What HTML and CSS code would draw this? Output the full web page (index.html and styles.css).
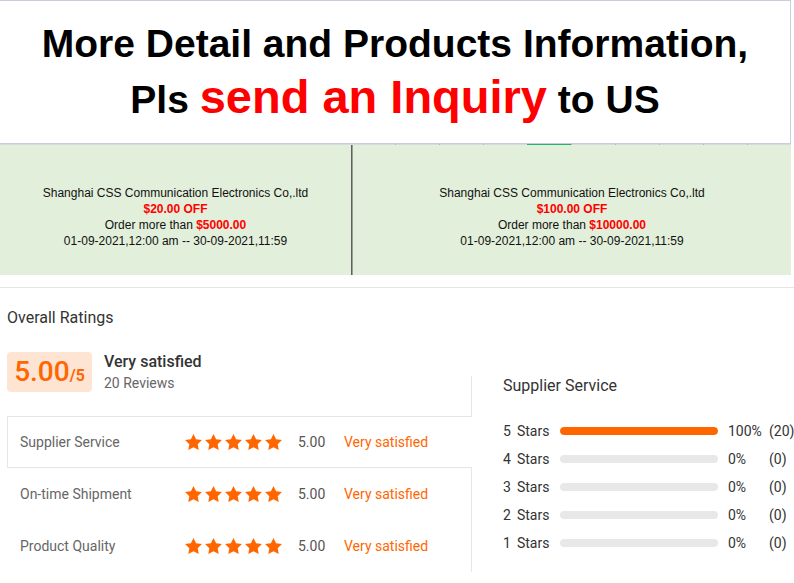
FILE: index.html
```html
<!DOCTYPE html>
<html>
<head>
<meta charset="utf-8">
<link rel="stylesheet" href="styles.css">
</head>
<body>
<svg class="defs" width="0" height="0">
  <symbol id="star" viewBox="2 2 20 19.02">
    <polygon points="12,2 15.09,8.26 22,9.27 17,14.14 18.18,21.02 12,17.77 5.82,21.02 7,14.14 2,9.27 8.91,8.26"/>
  </symbol>
</svg>
<div class="banner">
  <div class="line1">More Detail and Products Information,</div>
  <div class="line2">Pls <span class="red">send an Inquiry</span> to US</div>
</div>
<div class="tabstrip"><span></span><span></span><span></span><span class="on"></span><span></span><span></span><span></span><span></span><span></span></div>
<div class="coupons">
  <div class="coupon first">
    <div>Shanghai CSS Communication Electronics Co,.ltd</div>
    <div class="off">$20.00 OFF</div>
    <div>Order more than <b class="amt">$5000.00</b></div>
    <div>01-09-2021,12:00 am -- 30-09-2021,11:59</div>
  </div>
  <div class="divider"></div>
  <div class="coupon second">
    <div>Shanghai CSS Communication Electronics Co,.ltd</div>
    <div class="off">$100.00 OFF</div>
    <div>Order more than <b class="amt">$10000.00</b></div>
    <div>01-09-2021,12:00 am -- 30-09-2021,11:59</div>
  </div>
</div>
<div class="sep"></div>
<section class="ratings">
  <h2 class="title">Overall Ratings</h2>
  <div class="body">
    <div class="left">
      <div class="summary">
        <div class="scorebox"><span class="big">5.00</span><span class="of">/5</span></div>
        <div class="sumtext">
          <div class="verdict">Very satisfied</div>
          <div class="count">20 Reviews</div>
        </div>
      </div>
      <div class="tabs">
        <div class="tab active">
          <span class="label">Supplier Service</span>
          <span class="stars"><svg><use href="#star"/></svg><svg><use href="#star"/></svg><svg><use href="#star"/></svg><svg><use href="#star"/></svg><svg><use href="#star"/></svg></span>
          <span class="score">5.00</span>
          <span class="sat">Very satisfied</span>
        </div>
        <div class="tab">
          <span class="label">On-time Shipment</span>
          <span class="stars"><svg><use href="#star"/></svg><svg><use href="#star"/></svg><svg><use href="#star"/></svg><svg><use href="#star"/></svg><svg><use href="#star"/></svg></span>
          <span class="score">5.00</span>
          <span class="sat">Very satisfied</span>
        </div>
        <div class="tab">
          <span class="label">Product Quality</span>
          <span class="stars"><svg><use href="#star"/></svg><svg><use href="#star"/></svg><svg><use href="#star"/></svg><svg><use href="#star"/></svg><svg><use href="#star"/></svg></span>
          <span class="score">5.00</span>
          <span class="sat">Very satisfied</span>
        </div>
      </div>
    </div>
    <div class="panel">
      <div class="ptitle">Supplier Service</div>
      <div class="bars">
        <div class="barrow"><span class="blabel"><span class="n">5</span>Stars</span><span class="bar"><span class="fill" style="width:100%"></span></span><span class="pct">100%</span><span class="cnt">(20)</span></div>
        <div class="barrow"><span class="blabel"><span class="n">4</span>Stars</span><span class="bar"><span class="fill" style="width:0%"></span></span><span class="pct">0%</span><span class="cnt">(0)</span></div>
        <div class="barrow"><span class="blabel"><span class="n">3</span>Stars</span><span class="bar"><span class="fill" style="width:0%"></span></span><span class="pct">0%</span><span class="cnt">(0)</span></div>
        <div class="barrow"><span class="blabel"><span class="n">2</span>Stars</span><span class="bar"><span class="fill" style="width:0%"></span></span><span class="pct">0%</span><span class="cnt">(0)</span></div>
        <div class="barrow"><span class="blabel"><span class="n">1</span>Stars</span><span class="bar"><span class="fill" style="width:0%"></span></span><span class="pct">0%</span><span class="cnt">(0)</span></div>
      </div>
    </div>
  </div>
</section>
</body>
</html>
```
FILE: styles.css
```css
body {
  margin: 0;
  width: 794px;
  background: #fff;
  font-family: Roboto, "Liberation Sans", Arial, sans-serif;
}
.defs { position: absolute; width: 0; height: 0; }

.banner {
  box-sizing: border-box;
  width: 791px;
  height: 144px;
  border: 1px solid #c9cde0;
  border-left: 0;
  padding-top: 14px;
  font-family: "Liberation Sans", Arial, sans-serif;
  font-weight: bold;
  color: #000;
  text-align: center;
}
.line1 { font-size: 39px; line-height: 58px; }
.line2 { font-size: 39px; line-height: 48px; }
.red { color: #f00; font-size: 47px; }

.tabstrip {
  display: flex;
  box-sizing: border-box;
  width: 791px;
  height: 1px;
  padding-left: 395px;
  background: #d7dae0;
}
.tabstrip span {
  flex: none;
  width: 44px;
  box-sizing: border-box;
  border-left: 1px solid #b3b6be;
}
.tabstrip .on { background: #22b46a; border-left-color: #22b46a; }

.coupons {
  display: flex;
  width: 791px;
  height: 130px;
  background: #e2efda;
  font-family: "Liberation Sans", Arial, sans-serif;
  font-size: 12px;
  line-height: 16px;
  color: #111;
}
.coupon { text-align: center; padding-top: 40px; }
.coupon.first { width: 351px; flex: none; }
.coupon.second { flex: 1; }
.divider {
  flex: none;
  width: 1px;
  background: #5f5f5f;
  border-right: 1px solid #9a9e97;
}
.off, .amt { color: #f00; font-weight: bold; }

.sep { margin-top: 12px; height: 1px; background: #e6e6e6; }

.ratings { padding: 20px 0 0 7px; }
.title {
  margin: 0;
  font-size: 16px;
  font-weight: normal;
  line-height: 20px;
  color: #333;
}
.body { display: flex; margin-top: 24px; }
.left { width: 464px; flex: none; }
.summary { display: flex; height: 40px; }
.scorebox {
  width: 85px;
  height: 40px;
  background: #fde4d3;
  border-radius: 4px;
  display: flex;
  align-items: baseline;
  justify-content: center;
  line-height: 40px;
  color: #ff6600;
}
.big { font-size: 28px; font-weight: 500; }
.of { font-size: 16px; font-weight: 700; }
.sumtext { margin-left: 12px; }
.verdict { font-size: 16px; font-weight: 500; line-height: 20px; color: #333; }
.count { font-size: 14px; line-height: 20px; color: #666; margin-top: 1px; }

.tabs { margin-top: 24px; }
.tab {
  display: flex;
  align-items: center;
  height: 52px;
  box-sizing: border-box;
  border: 1px solid transparent;
  border-right: 0;
  padding-left: 12px;
  font-size: 14px;
  color: #666;
}
.tab.active {
  border-color: #e6e6e6;
  background: #fff;
  margin-right: -1px;
  position: relative;
  z-index: 1;
}
.label { width: 165px; flex: none; }
.stars { width: 113px; flex: none; display: flex; gap: 3px; }
.stars svg { width: 17px; height: 16px; fill: #ff6600; }
.score { width: 46px; flex: none; color: #555; }
.sat { color: #ff6600; }

.panel {
  flex: 1;
  box-sizing: border-box;
  margin-top: 24px;
  height: 196px;
  border-left: 1px solid #e6e6e6;
  padding-left: 31px;
}
.ptitle { font-size: 16px; line-height: 20px; color: #333; }
.bars { margin-top: 21px; }
.barrow {
  display: flex;
  align-items: center;
  height: 28px;
  font-size: 14px;
  color: #333;
}
.blabel { width: 57px; flex: none; }
.n { margin-right: 6px; }
.bar {
  flex: none;
  width: 158px;
  height: 8px;
  border-radius: 4px;
  background: #e8e8e8;
  overflow: hidden;
}
.fill { display: block; height: 100%; background: #ff6600; border-radius: 4px; }
.pct { margin-left: 10px; width: 41px; flex: none; }
```
